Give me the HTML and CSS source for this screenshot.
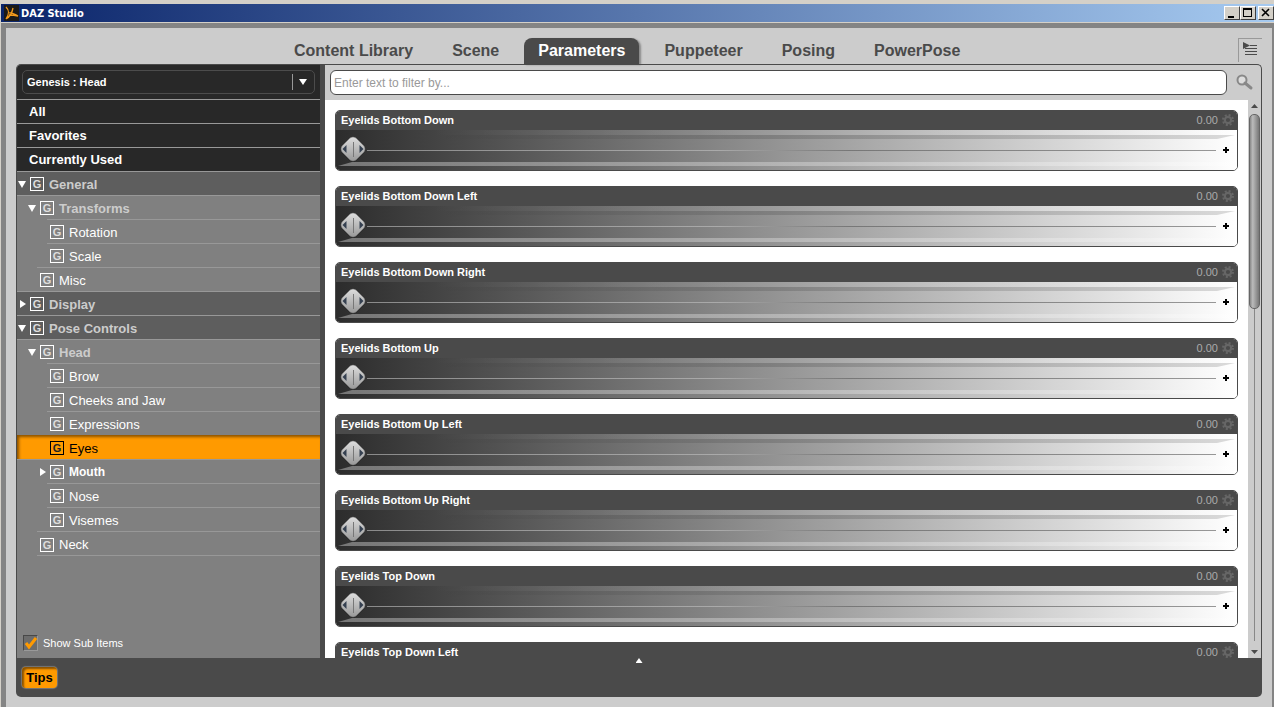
FILE: index.html
```
<!DOCTYPE html>
<html lang="en">

<head>
    <meta charset="UTF-8">
    <meta name="viewport" content="width=device-width, initial-scale=1.0">
    <title>DAZ Studio</title>

    <link rel="stylesheet" href="styles.css">
</head>

<body>
    <header class="titlebar">
        <svg class="logo" width="15" height="16" viewBox="0 0 15 16">
            <rect width="15" height="16" fill="#1c1a18" />
            <path d="M2 2C5 5 6 8 2 14M2 14C6 12 8 8 9 3M5 8C8 7 10 9 14 11C10 10 8 10 5 10" fill="none" stroke="#f39a1c" stroke-width="1.3" />
        </svg>
        <h1>DAZ Studio</h1>
        <div class="win-buttons">
            <button type="button" aria-label="Minimize"><svg width="14" height="12"><path d="M3 9h6v2H3z" /></svg></button>
            <button type="button" aria-label="Maximize"><svg width="14" height="12"><path d="M2 1h9v9H2zM3 3v6h7V3z" fill-rule="evenodd" /></svg></button>
            <button type="button" class="close" aria-label="Close"><svg width="14" height="12"><path d="M3 2l7 7M10 2l-7 7" stroke="#000" stroke-width="1.6" /></svg></button>
        </div>
    </header>

    <main class="frame">
        <nav class="tabs">
            <a href="#">Content Library</a>
            <a href="#">Scene</a>
            <a href="#" class="active">Parameters</a>
            <a href="#">Puppeteer</a>
            <a href="#">Posing</a>
            <a href="#">PowerPose</a>
            <button type="button" class="pane-menu" aria-label="Pane options">
                <svg width="23" height="23">
                    <path d="M4 3v7l7-3.500z" fill="#4a4a4a" />
                    <path d="M11 6.500h7M6 9.500h12M6 12.500h12M6 15.500h12" stroke="#4a4a4a" />
                </svg>
            </button>
        </nav>

        <div class="pane">
            <aside class="sidebar">
                <div class="picker">
                    <select aria-label="Node">
                        <option>Genesis : Head</option>
                    </select>
                </div>
                <ul class="filters">
                    <li><a href="#">All</a></li>
                    <li><a href="#">Favorites</a></li>
                    <li><a href="#">Currently Used</a></li>
                </ul>
                <ul class="tree">
                    <li class="top"><i class="arrow open"></i><span class="g">G</span><a href="#">General</a></li>
                    <li class="lv1 group"><i class="arrow open"></i><span class="g">G</span><a href="#">Transforms</a></li>
                    <li class="lv2"><i class="arrow"></i><span class="g">G</span><a href="#">Rotation</a></li>
                    <li class="lv2"><i class="arrow"></i><span class="g">G</span><a href="#">Scale</a></li>
                    <li class="lv1"><i class="arrow"></i><span class="g">G</span><a href="#">Misc</a></li>
                    <li class="top"><i class="arrow closed"></i><span class="g">G</span><a href="#">Display</a></li>
                    <li class="top"><i class="arrow open"></i><span class="g">G</span><a href="#">Pose Controls</a></li>
                    <li class="lv1 group"><i class="arrow open"></i><span class="g">G</span><a href="#">Head</a></li>
                    <li class="lv2"><i class="arrow"></i><span class="g">G</span><a href="#">Brow</a></li>
                    <li class="lv2"><i class="arrow"></i><span class="g">G</span><a href="#">Cheeks and Jaw</a></li>
                    <li class="lv2"><i class="arrow"></i><span class="g">G</span><a href="#">Expressions</a></li>
                    <li class="lv2 selected"><i class="arrow"></i><span class="g">G</span><a href="#">Eyes</a></li>
                    <li class="lv2 parent"><i class="arrow closed"></i><span class="g">G</span><a href="#">Mouth</a></li>
                    <li class="lv2"><i class="arrow"></i><span class="g">G</span><a href="#">Nose</a></li>
                    <li class="lv2"><i class="arrow"></i><span class="g">G</span><a href="#">Visemes</a></li>
                    <li class="lv1"><i class="arrow"></i><span class="g">G</span><a href="#">Neck</a></li>
                </ul>
                <label class="sub-items"><input type="checkbox" checked>Show Sub Items</label>
            </aside>

            <section class="content">
                <div class="search">
                    <input type="text" placeholder="Enter text to filter by..." aria-label="Filter">
                    <svg width="18" height="18" viewBox="0 0 18 18">
                        <circle cx="6" cy="6" r="4.500" fill="#ddd" stroke="#888" stroke-width="2" />
                        <path d="M9 9l6 5" stroke="#888" stroke-width="3" stroke-linecap="round" />
                    </svg>
                </div>
                <div class="scroll-area">
                    <div class="params" id="params"></div>
                    <div class="scrollbar">
                        <i class="up"></i>
                        <div class="rail"><div class="thumb"></div></div>
                        <i class="down"></i>
                    </div>
                </div>
            </section>
        </div>

        <footer class="bottom">
            <i class="expand"></i>
            <button type="button" class="tips">Tips</button>
        </footer>
    </main>

    <script src="script.js"></script>
</body>

</html>
```
FILE: styles.css
```
* {
    box-sizing: border-box;
}

body {
    margin: 0;
    height: 100vh;
    overflow: hidden;
    display: flex;
    flex-direction: column;
    padding: 4px 0 0 1px;
    background: #d4d0c8;
    font-family: "Liberation Sans", Arial, sans-serif;
    font-size: 12px;
    color: #fff;
}

a {
    color: inherit;
    text-decoration: none;
}

ul {
    list-style: none;
    margin: 0;
    padding: 0;
}

button {
    font-family: inherit;
    padding: 0;
}

/* title bar */
.titlebar {
    height: 18px;
    flex: none;
    display: flex;
    align-items: center;
    padding-left: 3px;
    background: linear-gradient(90deg, #0a246a, #a6caf0);
}

.titlebar h1 {
    flex: 1;
    margin: 0 0 0 2px;
    font: bold 11px "DejaVu Sans Condensed", "DejaVu Sans", sans-serif;
}

.win-buttons {
    display: flex;
}

.win-buttons button {
    width: 16px;
    height: 14px;
    border: 1px solid;
    border-color: #fff #404040 #404040 #fff;
    background: #d4d0c8;
}

.win-buttons .close {
    margin-left: 2px;
}

.win-buttons svg {
    display: block;
}

/* window frame */
.frame {
    flex: 1;
    min-height: 0;
    margin-top: 1px;
    display: flex;
    flex-direction: column;
    border: solid #848484;
    border-width: 5px 2px 0 5px;
    padding: 10px;
    background: #ccc;
}

.tabs {
    display: flex;
    flex: none;
    height: 26px;
    padding-left: 264px;
    font-size: 16px;
    font-weight: bold;
    line-height: 25px;
    color: #4a4a4a;
}

.tabs a {
    padding: 0 14px;
    margin-right: 11px;
    border-radius: 8px 8px 0 0;
}

.tabs .active {
    background: #4a4a4a;
    color: #fff;
    box-shadow: 2px 1px 2px #888;
}

.pane-menu {
    margin-left: auto;
    width: 24px;
    height: 24px;
    border: 1px solid #999;
    border-width: 1px 0 0 1px;
    background: none;
}

.pane-menu svg {
    display: block;
}

.pane {
    flex: 1;
    min-height: 0;
    display: flex;
    border: 1px solid #4a4a4a;
    border-bottom: 0;
    border-radius: 5px 5px 0 0;
    overflow: hidden;
}

/* left side */
.sidebar {
    width: 308px;
    flex: none;
    display: flex;
    flex-direction: column;
    border-right: 5px solid #4a4a4a;
    background: #808080;
}

.picker {
    padding: 5px;
    background: #282828;
}

.picker select {
    display: block;
    width: 100%;
    height: 24px;
    appearance: none;
    padding: 0 5px 1px 4px;
    border: 1px solid #4c4c4c;
    border-radius: 5px;
    color: #fff;
    font: bold 11px "Liberation Sans", Arial, sans-serif;
    background:
        url("data:image/svg+xml,%3Csvg xmlns='http://www.w3.org/2000/svg' width='22' height='16'%3E%3Cpath d='M.5 0v16' stroke='%23999'/%3E%3Cpath d='M7 5h8l-4 6z' fill='%23fff'/%3E%3C/svg%3E") no-repeat right 0 center,
        #282828;
}

.filters li {
    height: 24px;
    padding-left: 12px;
    border-top: 1px solid #999;
    background: #282828;
    font-size: 13px;
    font-weight: bold;
    line-height: 24px;
}

.tree {
    flex: 1;
}

.tree li {
    display: flex;
    align-items: center;
    height: 24px;
    padding-top: 2px;
    font-size: 13px;
    background: linear-gradient(#989898, #989898) no-repeat 0 0 / 100% 1px;
}

.tree .top {
    padding-left: 1px;
    background-color: #5e5e5e;
    font-weight: bold;
    color: #ccc;
}

.tree .lv1 {
    padding-left: 11px;
    background-position: 20px 0;
}

.tree .lv2 {
    padding-left: 21px;
    background-position: 30px 0;
}

.tree .top + .lv1,
.tree .selected + li {
    background-position: 0 0;
}

.tree .group {
    color: #ccc;
    font-weight: bold;
}

.tree .parent {
    font-size: 12px;
    font-weight: bold;
}

.tree .selected {
    color: #000;
    background: #ff9a00;
    box-shadow: inset 2px 2px 3px #8a5200;
}

.tree li:last-child {
    height: 25px;
    background-image: linear-gradient(#989898, #989898), linear-gradient(#989898, #989898);
    background-position: 20px 0, 20px 100%;
    background-repeat: no-repeat;
}

.arrow {
    width: 8px;
    margin-right: 4px;
    height: 8px;
}

.open {
    background: #fff;
    clip-path: polygon(0 1px, 100% 1px, 50% 100%);
}

.closed {
    background: #fff;
    clip-path: polygon(2px 0, 100% 50%, 2px 100%);
}

.g {
    width: 14px;
    height: 14px;
    margin-right: 5px;
    border: 1px solid #fff;
    color: #ddd;
    font: bold 11px/12px "Liberation Sans", Arial, sans-serif;
    text-align: center;
}

.selected .g {
    border-color: #000;
    color: #222;
}

.sub-items {
    display: flex;
    align-items: center;
    gap: 5px;
    padding: 0 0 7px 6px;
    font-size: 11px;
}

.sub-items input {
    appearance: none;
    width: 15px;
    height: 16px;
    margin: 0;
    border: 1px solid;
    border-color: #484848 #999 #999 #484848;
    background: url("data:image/svg+xml,%3Csvg xmlns='http://www.w3.org/2000/svg' width='13' height='14'%3E%3Cpath d='M2 7l3 4 7-9' fill='none' stroke='%23ff9a00' stroke-width='3'/%3E%3C/svg%3E") no-repeat center #6c6c6c;
}

/* right side */
.content {
    flex: 1;
    min-width: 0;
    display: flex;
    flex-direction: column;
}

.search {
    display: flex;
    align-items: center;
    gap: 9px;
    padding: 5px 7px 5px 5px;
}

.search input {
    flex: 1;
    height: 25px;
    padding: 0 3px;
    border: 1px solid #4a4a4a;
    border-radius: 6px;
    font: 12px "Liberation Sans", Arial, sans-serif;
}

.search input::placeholder {
    color: #999;
}

.scroll-area {
    flex: 1;
    min-height: 0;
    display: flex;
}

.params {
    flex: 1;
    min-width: 0;
    overflow: hidden;
    display: flex;
    flex-direction: column;
    gap: 15px;
    padding: 10px 10px 0;
    background: #fff;
}

.param {
    flex: none;
    height: 61px;
    border: 1px solid #4a4a4a;
    border-radius: 5px;
    overflow: hidden;
}

.param-head {
    display: flex;
    align-items: center;
    height: 19px;
    padding: 0 3px 2px 5px;
    background: #4a4a4a;
    font-size: 11px;
}

.param-head label {
    flex: 1;
    font-weight: bold;
}

.param-head output {
    margin-right: 4px;
    color: #aaa;
}

.param-body {
    position: relative;
    display: flex;
    align-items: center;
    height: 40px;
    padding: 0 7px 0 3px;
    background:
        linear-gradient(90deg, transparent 10%, rgba(255, 255, 255, .2)) no-repeat 0 0 / 100% 5px,
        linear-gradient(90deg, #2c2c2c, #969696 50%, #fff);
}

/* the two glossy bands above and below the slider */
.param-body::before,
.param-body::after {
    content: "";
    position: absolute;
    left: 2px;
    right: 2px;
    height: 4px;
}

.param-body::before {
    top: 5px;
    background: linear-gradient(90deg, transparent 10%, rgba(0, 0, 0, .14) 50%);
    clip-path: polygon(0 0, 100% 0, calc(100% - 18px) 100%, 0 100%);
}

.param-body::after {
    bottom: 4px;
    background: linear-gradient(90deg, rgba(255, 255, 255, .35), rgba(255, 255, 255, .25));
    clip-path: polygon(14px 0, 100% 0, 100% 100%, 0 100%);
}

.param-body input {
    appearance: none;
    flex: 1;
    min-width: 0;
    height: 28px;
    margin: 0 6px 0 0;
    background: linear-gradient(90deg, #8a8a8a, #aaa 40%, #777 55%, #999) no-repeat 28px 14px / 100% 1px;
}

.param-body input::-webkit-slider-thumb {
    appearance: none;
    width: 28px;
    height: 28px;
    background: url("data:image/svg+xml,%3Csvg xmlns='http://www.w3.org/2000/svg' width='28' height='28'%3E%3Cdefs%3E%3ClinearGradient id='a' x2='0' y2='1'%3E%3Cstop stop-color='%23ddd'/%3E%3Cstop offset='1' stop-color='%23999'/%3E%3C/linearGradient%3E%3C/defs%3E%3Cpath d='M11 3q3-2 6 0l8 8q2 3 0 6l-8 8q-3 2-6 0l-8-8q-2-3 0-6z' fill='%23222' opacity='.5'/%3E%3Cpath d='M11 2q3-2 6 0l8 8q2 3 0 6l-8 8q-3 2-6 0l-8-8q-2-3 0-6z' fill='url(%23a)' stroke='%23777' stroke-width='.5'/%3E%3Cpath d='M7.500 9v8l-4-4zM20.500 9v8l4-4z' fill='%23354050'/%3E%3Cpath d='M14.500 6v15' stroke='%23777'/%3E%3C/svg%3E") no-repeat center;
}

.plus {
    width: 8px;
    height: 8px;
}

.scrollbar {
    width: 13px;
    display: flex;
    flex-direction: column;
    align-items: center;
    padding: 4px 0;
}

.up,
.down {
    width: 7px;
    height: 4px;
    background: #4a4a4a;
    clip-path: polygon(50% 0, 100% 100%, 0 100%);
}

.down {
    clip-path: polygon(0 0, 100% 0, 50% 100%);
}

.rail {
    flex: 1;
    width: 11px;
    margin: 6px 0 9px;
    background: linear-gradient(#888, #888) no-repeat center / 1px 100%;
}

.thumb {
    height: 37%;
    border: 1px solid #666;
    border-radius: 5px;
    background: linear-gradient(90deg, #888, #bbb 30%, #777);
}

/* bottom strip */
.bottom {
    flex: none;
    height: 39px;
    display: flex;
    flex-direction: column;
    align-items: flex-start;
    border-radius: 0 0 5px 5px;
    background: #4a4a4a;
}

.expand {
    align-self: center;
    width: 7px;
    height: 5px;
    background: #fff;
    clip-path: polygon(50% 0, 100% 100%, 0 100%);
}

.tips {
    width: 35px;
    height: 21px;
    margin: 4px 0 0 6px;
    border: 0;
    border-radius: 4px;
    background: #ff9a00;
    box-shadow: inset 2px 2px 2px #8a5200, 0 0 1px 1px #777;
    font-size: 13px;
    font-weight: bold;
}
```
FILE: script.js
```
const names = [
    "Eyelids Bottom Down",
    "Eyelids Bottom Down Left",
    "Eyelids Bottom Down Right",
    "Eyelids Bottom Up",
    "Eyelids Bottom Up Left",
    "Eyelids Bottom Up Right",
    "Eyelids Top Down",
    "Eyelids Top Down Left"
];

document.getElementById("params").innerHTML = names.map((name, i) => `
    <div class="param">
        <div class="param-head">
            <label for="p${i}">${name}</label>
            <output for="p${i}">0.00</output>
            <svg width="12" height="12" viewBox="0 0 12 12">
                <circle cx="6" cy="6" r="3.200" fill="none" stroke="#666" stroke-width="2.200" />
                <circle cx="6" cy="6" r="5" fill="none" stroke="#666" stroke-width="2" stroke-dasharray="2 1.930" />
            </svg>
        </div>
        <div class="param-body">
            <input type="range" id="p${i}" min="0" max="1" step="0.01" value="0">
            <svg class="plus" viewBox="0 0 8 8"><path d="M3 1h2v2h2v2H5v2H3V5H1V3h2z" /></svg>
        </div>
    </div>`).join("");
```
